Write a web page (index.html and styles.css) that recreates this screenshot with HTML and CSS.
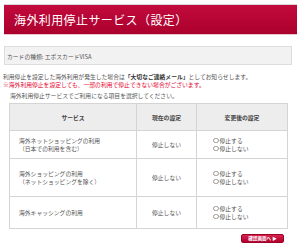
FILE: index.html
```html
<!DOCTYPE html>
<html lang="ja">
<head>
    <meta charset="UTF-8">
    <title>海外利用停止サービス（設定）</title>
    <link rel="stylesheet" href="styles.css">
</head>
<body>
    <div class="page">
        <h1 class="title-bar">海外利用停止サービス（設定）</h1>

        <div class="card-type">カードの種類: エポスカードVISA</div>

        <p class="notice">利用停止を設定した海外利用が発生した場合は<b>「大切なご連絡メール」</b>としてお知らせします。</p>
        <p class="notice warn">※海外利用停止を設定しても、一部の利用で停止できない場合がございます。</p>
        <p class="lead">海外利用停止サービスでご利用になる項目を選択してください。</p>

        <table class="settings">
            <thead>
                <tr>
                    <th class="col-service">サービス</th>
                    <th class="col-now">現在の設定</th>
                    <th class="col-new">変更後の設定</th>
                </tr>
            </thead>
            <tbody>
                <tr class="row-a">
                    <td class="service">海外ネットショッピングの利用<br>（日本での利用を含む）</td>
                    <td class="now">停止しない</td>
                    <td class="choice">
                        <label><span class="radio"></span>停止する</label>
                        <label><span class="radio"></span>停止しない</label>
                    </td>
                </tr>
                <tr class="row-b">
                    <td class="service">海外ショッピングの利用<br>（ネットショッピングを除く）</td>
                    <td class="now">停止しない</td>
                    <td class="choice">
                        <label><span class="radio"></span>停止する</label>
                        <label><span class="radio"></span>停止しない</label>
                    </td>
                </tr>
                <tr class="row-c">
                    <td class="service">海外キャッシングの利用</td>
                    <td class="now">停止しない</td>
                    <td class="choice">
                        <label><span class="radio"></span>停止する</label>
                        <label><span class="radio"></span>停止しない</label>
                    </td>
                </tr>
            </tbody>
        </table>

        <div class="actions">
            <button class="confirm-button">確認画面へ ▶</button>
        </div>
    </div>
</body>
</html>
```

FILE: styles.css
```css
* {
    margin: 0;
    padding: 0;
    box-sizing: border-box;
}

body {
    font-family: "Noto Sans CJK JP", "Noto Sans", sans-serif;
    background: #ffffff;
    color: #555555;
    font-size: 5.8px;
}

.page {
    padding: 4px 3px 0 3px;
}

.title-bar {
    margin-left: 1px;
    height: 31px;
    border-top: 1px solid #d6d6d6;
    border-bottom: 1px solid #e9c3cc;
    background: linear-gradient(#c20a3d, #ab002d);
    color: #ffffff;
    font-size: 12px;
    font-weight: normal;
    line-height: 29px;
    padding-left: 10px;
    letter-spacing: 0.4px;
}

.card-type {
    margin: 11px 5px 0 1px;
    height: 19px;
    background: #f2f2f2;
    border: 1px solid #dddddd;
    padding-left: 2px;
    line-height: 20px;
    color: #555555;
}

.notice {
    margin-top: 8px;
    line-height: 8px;
}

.notice + .notice {
    margin-top: 0;
}

.notice b {
    color: #333333;
}

.warn {
    color: #e2062f;
}

.lead {
    margin: 3px 0 0 7px;
    line-height: 8px;
}

.settings {
    margin: 3px 0 0 6px;
    width: 278px;
    border-collapse: collapse;
    table-layout: fixed;
}

.settings th,
.settings td {
    border: 1px solid #d4d4d4;
    vertical-align: middle;
}

.settings th {
    background: #ededed;
    height: 27px;
    font-weight: bold;
    color: #444444;
}

.col-service {
    width: 127px;
}

.col-now {
    width: 60px;
}

.col-new {
    width: 91px;
}

.service {
    padding-left: 9px;
    line-height: 7.5px;
}

.now {
    text-align: center;
}

.choice {
    padding-left: 16px;
}

.choice label {
    display: flex;
    align-items: center;
    line-height: 8px;
}

.radio {
    width: 5.5px;
    height: 5.5px;
    border: 0.6px solid #999999;
    border-radius: 50%;
    margin-right: 1px;
}

.row-a td {
    height: 28px;
}

.row-b td {
    height: 38px;
}

.row-c td {
    height: 32px;
}

.actions {
    display: flex;
    justify-content: flex-end;
    padding: 5px 13px 0 0;
}

.confirm-button {
    width: 43px;
    height: 9px;
    border: 1px solid #9e0026;
    border-radius: 2px;
    background: linear-gradient(#d8234f, #b0002f);
    color: #ffffff;
    font-family: inherit;
    font-size: 4.6px;
    font-weight: bold;
    line-height: 7px;
}
```
